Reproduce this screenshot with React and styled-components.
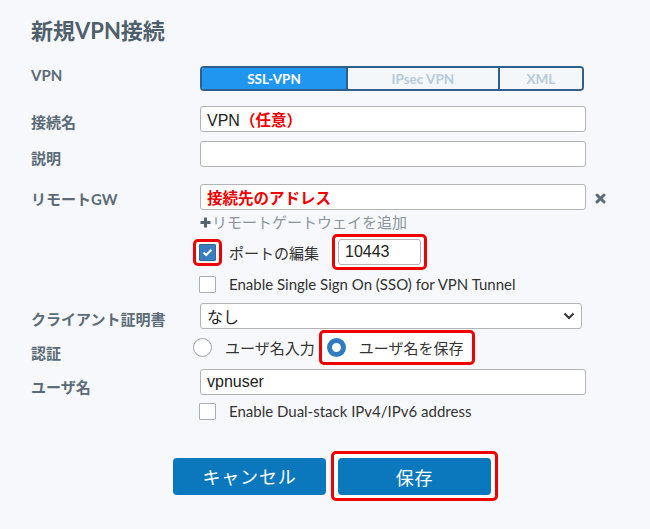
import React from "react";
import styled, { createGlobalStyle } from "styled-components";

const sans = `Lato, "Noto Sans CJK JP", sans-serif`;
const arial = `"Liberation Sans", "Noto Sans CJK JP", sans-serif`;
const red = "#ee0000";

const GlobalStyle = createGlobalStyle`
  body {
    margin: 0;
    background: #f7f8fb;
  }
`;

const Page = styled.div`
  width: 650px;
  height: 529px;
  box-sizing: border-box;
  padding: 16px 0 0 31px;
  background: #f7f8fb;
  font-family: ${sans};
  color: #333;
  overflow: hidden;
`;

const Title = styled.h1`
  margin: 0;
  font-size: 22px;
  line-height: 30px;
  font-weight: 700;
  color: #4f5f6b;
`;

const Form = styled.div`
  display: flex;
  flex-direction: column;
`;

const Row = styled.div`
  display: grid;
  grid-template-columns: 169px 1fr;
  align-items: center;
  margin-top: ${(p) => p.$mt}px;
  height: ${(p) => p.$h}px;
`;

const Label = styled.div`
  font-size: 15px;
  line-height: 20px;
  font-weight: 700;
  color: #5b6b78;
  ${(p) =>
    p.$dy > 0
      ? `padding-top: ${p.$dy * 2}px;`
      : p.$dy < 0
      ? `padding-bottom: ${-p.$dy * 2}px;`
      : ""}
`;

const Cell = styled.div`
  display: flex;
  align-items: center;
  height: 100%;
`;

const Segmented = styled.div`
  display: flex;
  width: 384px;
  height: 25px;
  box-sizing: border-box;
  border: 2px solid #2f5f8a;
  border-radius: 4px;
  overflow: hidden;
`;

const Segment = styled.div`
  width: ${(p) => p.$w}px;
  display: flex;
  align-items: center;
  justify-content: center;
  font-size: 13.5px;
  font-weight: 700;
  background: ${(p) => (p.$active ? "#2196f0" : "#f4f7fa")};
  color: ${(p) => (p.$active ? "#fff" : "#b8cbda")};
  & + & {
    border-left: 2px solid #2f5f8a;
  }
`;

const Field = styled.div`
  width: ${(p) => p.$w || 386}px;
  height: 26px;
  box-sizing: border-box;
  border: 1px solid #b4b4b4;
  border-radius: 3px;
  background: #fff;
  padding: 0 6px;
  display: flex;
  align-items: center;
  justify-content: space-between;
  font-family: ${arial};
  font-size: 16px;
  color: #222;
`;

const Note = styled.span`
  color: ${red};
  font-weight: 700;
  font-family: "Noto Sans CJK JP", sans-serif;
  font-size: 15.5px;
`;

const RemoveIcon = styled.svg`
  margin-left: 9px;
  margin-top: 2px;
`;

const AddLink = styled.div`
  display: flex;
  align-items: center;
  font-size: 15px;
  line-height: 20px;
  color: #8a959d;
  svg {
    margin-right: 1px;
  }
`;

const Line = styled.div`
  display: flex;
  align-items: center;
  height: 100%;
`;

const Highlight = styled.div`
  display: flex;
  align-items: center;
  border: 3px solid ${red};
  border-radius: 5px;
  background: #fff;
  padding: ${(p) => p.$pad};
  margin-left: ${(p) => p.$ml || 0}px;
`;

const Box = styled.div`
  width: 17px;
  height: 17px;
  box-sizing: border-box;
  flex-shrink: 0;
  border-radius: 1px;
  display: flex;
  align-items: center;
  justify-content: center;
  margin-left: ${(p) => p.$ml || 0}px;
  background: ${(p) => (p.$checked ? "#3a7cc0" : "#fff")};
  border: 1px solid ${(p) => (p.$checked ? "#2f68a3" : "#a5b0b8")};
`;

const Text = styled.span`
  font-size: ${(p) => p.$size || 15}px;
  color: #333;
  margin-left: ${(p) => p.$ml || 0}px;
  white-space: nowrap;
`;

const PortInput = styled(Field)`
  width: 83px;
`;

const Radio = styled.div`
  width: 19px;
  height: 19px;
  box-sizing: border-box;
  border-radius: 50%;
  background: #fff;
  flex-shrink: 0;
  margin-left: ${(p) => p.$ml || 0}px;
  border: ${(p) => (p.$checked ? "5px solid #2f7cc0" : "1px solid #9aa5ad")};
`;

const Buttons = styled.div`
  display: flex;
  align-items: center;
  margin-top: 32px;
  padding-left: 142px;
`;

const Button = styled.button`
  width: 153px;
  height: 37px;
  border: none;
  border-radius: 4px;
  background: #0b77bc;
  color: #fff;
  font-family: "Noto Sans CJK JP", sans-serif;
  font-size: 18px;
  letter-spacing: 0.8px;
  padding: 0;
`;

function Check({ checked, ml }) {
  return (
    <Box $checked={checked} $ml={ml}>
      {checked && (
        <svg width="11" height="9" viewBox="0 0 11 9">
          <path d="M1.5 4.5 L4.2 7 L9.5 1.8" fill="none" stroke="#fff" strokeWidth="2" />
        </svg>
      )}
    </Box>
  );
}

export default function App() {
  return (
    <Page>
      <GlobalStyle />
      <Title>新規VPN接続</Title>
      <Form>
        <Row $mt={19} $h={25}>
          <Label $dy={-3.5}>VPN</Label>
          <Segmented>
            <Segment $w={147} $active>SSL-VPN</Segment>
            <Segment $w={153}>IPsec VPN</Segment>
            <Segment $w={84}>XML</Segment>
          </Segmented>
        </Row>

        <Row $mt={16} $h={26}>
          <Label $dy={3}>接続名</Label>
          <Field>
            <span>
              VPN<Note>（任意）</Note>
            </span>
          </Field>
        </Row>

        <Row $mt={8} $h={26}>
          <Label $dy={4}>説明</Label>
          <Field />
        </Row>

        <Row $mt={18} $h={26}>
          <Label $dy={2}>リモートGW</Label>
          <Cell>
            <Field>
              <Note>接続先のアドレス</Note>
            </Field>
            <RemoveIcon width="11" height="11" viewBox="0 0 11 11">
              <path d="M2 2 L9 9 M9 2 L2 9" stroke="#5b6b78" strokeWidth="3" strokeLinecap="round" />
            </RemoveIcon>
          </Cell>
        </Row>

        <Row $mt={2} $h={20}>
          <span />
          <AddLink>
            <svg width="11" height="11" viewBox="0 0 11 11">
              <path d="M5.5 0.5 V10.5 M0.5 5.5 H10.5" stroke="#56626c" strokeWidth="3" />
            </svg>
            リモートゲートウェイを追加
          </AddLink>
        </Row>

        <Row $mt={2} $h={36}>
          <span />
          <Line>
            <Highlight $ml={-7} $pad="2px 3px">
              <Check checked />
            </Highlight>
            <Text $ml={7}>ポートの編集</Text>
            <Highlight $ml={13} $pad="2px 3px">
              <PortInput>10443</PortInput>
            </Highlight>
          </Line>
        </Row>

        <Row $mt={5} $h={17}>
          <span />
          <Line>
            <Check ml={-1} />
            <Text $ml={13}>Enable Single Sign On (SSO) for VPN Tunnel</Text>
          </Line>
        </Row>

        <Row $mt={10} $h={26}>
          <Label $dy={3.5}>クライアント証明書</Label>
          <Field $w={382}>
            <span>なし</span>
            <svg width="12" height="8" viewBox="0 0 12 8">
              <path d="M1.5 1.5 L6 6 L10.5 1.5" fill="none" stroke="#333" strokeWidth="2" />
            </svg>
          </Field>
        </Row>

        <Row $mt={2} $h={33}>
          <Label $dy={5}>認証</Label>
          <Line>
            <Radio $ml={-7} />
            <Text $ml={13}>ユーザ名入力</Text>
            <Highlight $ml={4} $pad="4px 9px 4px 5px">
              <Radio $checked />
              <Text $ml={13}>ユーザ名を保存</Text>
            </Highlight>
          </Line>
        </Row>

        <Row $mt={4} $h={26}>
          <Label $dy={5}>ユーザ名</Label>
          <Field>vpnuser</Field>
        </Row>

        <Row $mt={9} $h={17}>
          <span />
          <Line>
            <Check ml={-1} />
            <Text $ml={13}>Enable Dual-stack IPv4/IPv6 address</Text>
          </Line>
        </Row>
      </Form>

      <Buttons>
        <Button>キャンセル</Button>
        <Highlight $ml={5} $pad="4px 4px 3px 4px">
          <Button>保存</Button>
        </Highlight>
      </Buttons>
    </Page>
  );
}
